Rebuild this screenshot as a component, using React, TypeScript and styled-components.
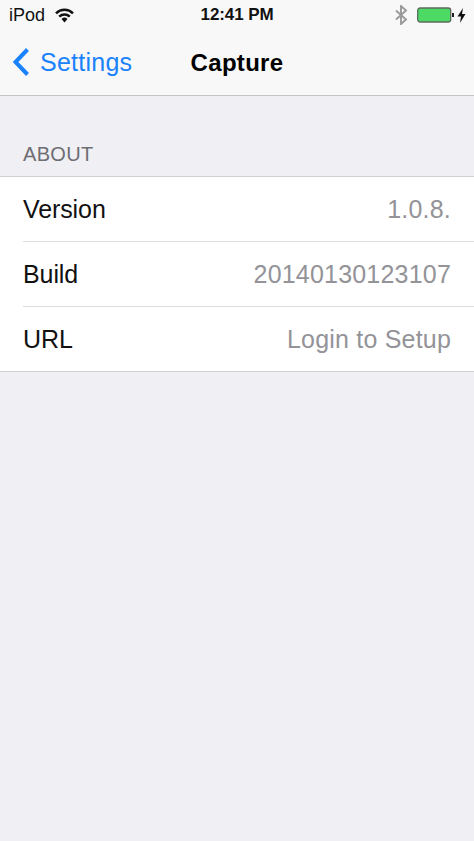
import React from 'react'
import styled, { createGlobalStyle } from 'styled-components'

const GlobalStyle = createGlobalStyle`
  html, body {
    margin: 0;
    padding: 0;
    background: #efeff4;
  }
  * {
    box-sizing: border-box;
  }
`

const Screen = styled.div`
  width: 474px;
  height: 841px;
  overflow: hidden;
  display: flex;
  flex-direction: column;
  background: #efeff4;
  font-family: 'Liberation Sans', Arial, sans-serif;
`

const Header = styled.header`
  height: 96px;
  flex-shrink: 0;
  background: #f8f8f8;
  border-bottom: 1px solid #c4c4c6;
  display: flex;
  flex-direction: column;
`

const StatusBar = styled.div`
  height: 30px;
  padding: 0 8px 0 9px;
  display: grid;
  grid-template-columns: 1fr auto 1fr;
  align-items: center;
  font-size: 18px;
  color: #111;
`

const StatusLeft = styled.div`
  display: flex;
  align-items: center;
  gap: 10px;
`

const StatusRight = styled.div`
  display: flex;
  align-items: center;
  justify-content: flex-end;
`

const Clock = styled.div`
  font-weight: 700;
  font-size: 17px;
  letter-spacing: -0.1px;
  margin-left: -1px;
`

const NavBar = styled.div`
  flex: 1;
  position: relative;
  display: flex;
  align-items: center;
  justify-content: center;
`

const Back = styled.div`
  position: absolute;
  left: 12px;
  top: 17px;
  display: flex;
  align-items: center;
  gap: 10px;
  color: #1a82fb;
  font-size: 25px;
  letter-spacing: 0.25px;
`

const Title = styled.div`
  font-size: 24px;
  font-weight: 700;
  letter-spacing: 0.3px;
  color: #000;
`

const SectionLabel = styled.div`
  padding: 46px 23px 0;
  height: 80px;
  font-size: 20px;
  line-height: 24px;
  letter-spacing: 0.3px;
  color: #6d6d72;
`

const List = styled.div`
  background: #fff;
  border-top: 1px solid #d0d0d3;
  border-bottom: 1px solid #d0d0d3;
`

const Row = styled.div<{ $last?: boolean }>`
  height: ${p => (p.$last ? 64 : 65)}px;
  margin-left: 23px;
  padding-right: 23px;
  display: flex;
  align-items: center;
  justify-content: space-between;
  border-bottom: ${p => (p.$last ? 'none' : '1px solid #dcdcde')};
`

const Label = styled.span`
  font-size: 25px;
  letter-spacing: -0.1px;
  color: #111;
`

const Value = styled.span`
  font-size: 25px;
  letter-spacing: 0.2px;
  color: #939398;
`

const WifiIcon = () => (
  <svg width="19" height="15" viewBox="0 0 19 15">
    <path d="M1 5.300a12.200 12.200 0 0 1 17 0" fill="none" stroke="#111" strokeWidth="2.500" />
    <path d="M4.200 8.600a7.700 7.700 0 0 1 10.600 0" fill="none" stroke="#111" strokeWidth="2.500" />
    <path d="M9.500 14.500l-3-3.500a4.300 4.300 0 0 1 6 0z" fill="#111" />
  </svg>
)

const BluetoothIcon = () => (
  <svg width="14" height="20" viewBox="0 0 14 20">
    <path d="M2 5.500l10 9-5 4.500V1l5 4.500-10 9" fill="none" stroke="#9a9a9a" strokeWidth="1.900" />
  </svg>
)

const BatteryIcon = () => (
  <svg width="37" height="16" viewBox="0 0 37 16" style={{ marginLeft: 9 }}>
    <rect x="0.700" y="1" width="33" height="14" rx="2.500" fill="#4cd964" stroke="#5c6b5e" strokeWidth="1.300" />
    <rect x="35" y="6" width="2" height="4" fill="#222" />
  </svg>
)

const BoltIcon = () => (
  <svg width="9" height="15" viewBox="0 0 9 15" style={{ marginLeft: 3 }}>
    <path d="M6 0L0.500 8.500h3.500L3 15l5.500-9H5z" fill="#111" />
  </svg>
)

const BackIcon = () => (
  <svg width="18" height="30" viewBox="0 0 18 30">
    <path d="M15.500 2.500L3.500 15l12 12.500" fill="none" stroke="#1a82fb" strokeWidth="4" />
  </svg>
)

const rows = [
  { label: 'Version', value: '1.0.8.' },
  { label: 'Build', value: '20140130123107' },
  { label: 'URL', value: 'Login to Setup' },
]

const App = () => {
  return (
    <Screen>
      <GlobalStyle />
      <Header>
        <StatusBar>
          <StatusLeft>
            iPod
            <WifiIcon />
          </StatusLeft>
          <Clock>12:41 PM</Clock>
          <StatusRight>
            <BluetoothIcon />
            <BatteryIcon />
            <BoltIcon />
          </StatusRight>
        </StatusBar>
        <NavBar>
          <Back>
            <BackIcon />
            Settings
          </Back>
          <Title>Capture</Title>
        </NavBar>
      </Header>
      <SectionLabel>ABOUT</SectionLabel>
      <List>
        {rows.map((r, i) => (
          <Row key={r.label} $last={i === rows.length - 1}>
            <Label>{r.label}</Label>
            <Value>{r.value}</Value>
          </Row>
        ))}
      </List>
    </Screen>
  )
}

export default App
